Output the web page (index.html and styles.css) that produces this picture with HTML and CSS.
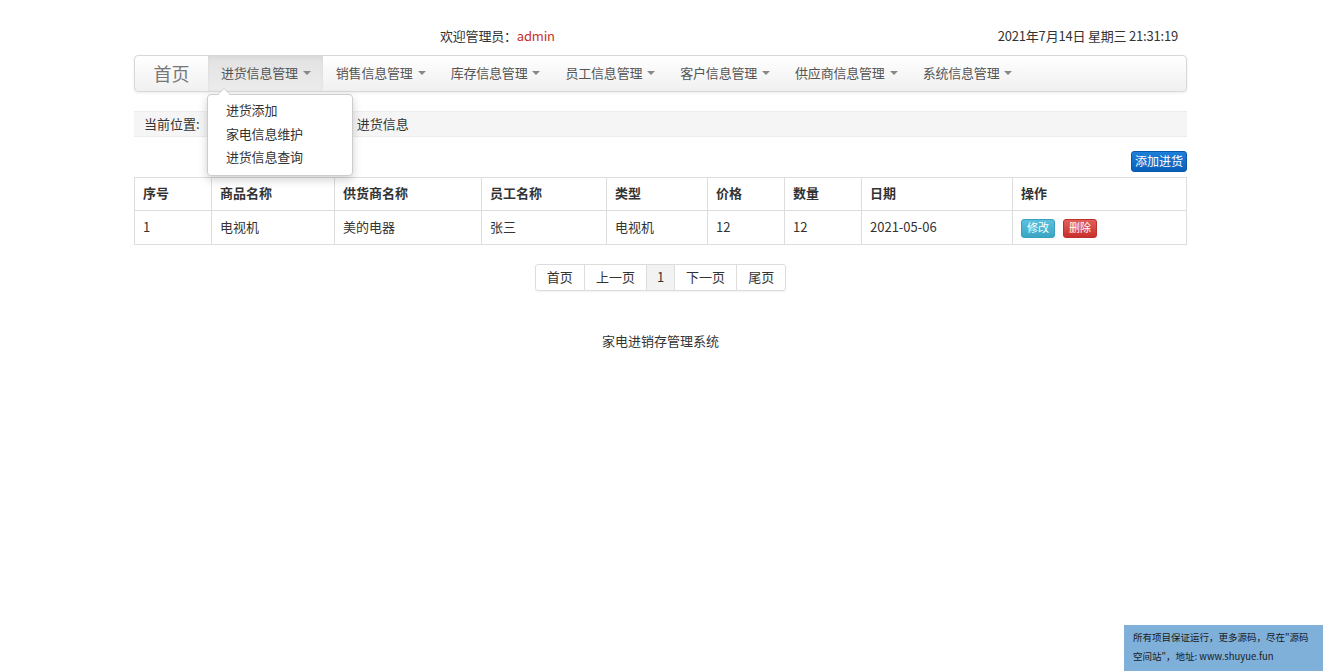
FILE: index.html
```html
<!DOCTYPE html>
<html lang="zh">
<head>
<meta charset="utf-8">
<title>家电进销存管理系统</title>
<link rel="stylesheet" href="styles.css">
</head>
<body>
<div class="container">
  <div class="topbar">
    <div class="welcome">欢迎管理员：<span class="admin">admin</span></div>
    <div class="date">2021年7月14日 星期三 21:31:19</div>
  </div>
  <div class="navbar">
    <div class="brand">首页</div>
    <ul class="nav">
      <li class="nav-item active">进货信息管理<span class="caret"></span>
        <ul class="dropdown">
          <li>进货添加</li>
          <li>家电信息维护</li>
          <li>进货信息查询</li>
        </ul>
      </li>
      <li class="nav-item">销售信息管理<span class="caret"></span></li>
      <li class="nav-item">库存信息管理<span class="caret"></span></li>
      <li class="nav-item">员工信息管理<span class="caret"></span></li>
      <li class="nav-item">客户信息管理<span class="caret"></span></li>
      <li class="nav-item">供应商信息管理<span class="caret"></span></li>
      <li class="nav-item">系统信息管理<span class="caret"></span></li>
    </ul>
  </div>
  <div class="breadcrumb"><span>当前位置:</span><span class="crumb-cur">进货信息</span></div>
  <div class="actions"><button class="btn btn-primary">添加进货</button></div>
  <table class="table">
    <colgroup>
      <col style="width:77px"><col style="width:123px"><col style="width:147px"><col style="width:125px"><col style="width:101px"><col style="width:77px"><col style="width:77px"><col style="width:151px"><col>
    </colgroup>
    <thead>
      <tr><th>序号</th><th>商品名称</th><th>供货商名称</th><th>员工名称</th><th>类型</th><th>价格</th><th>数量</th><th>日期</th><th>操作</th></tr>
    </thead>
    <tbody>
      <tr><td>1</td><td>电视机</td><td>美的电器</td><td>张三</td><td>电视机</td><td>12</td><td>12</td><td>2021-05-06</td><td><button class="btn btn-sm btn-info">修改</button><button class="btn btn-sm btn-danger">删除</button></td></tr>
    </tbody>
  </table>
  <div class="pager-wrap">
    <ul class="pagination">
      <li>首页</li><li>上一页</li><li class="current">1</li><li>下一页</li><li>尾页</li>
    </ul>
  </div>
  <div class="footer">家电进销存管理系统</div>
</div>
<div class="notice">所有项目保证运行，更多源码，尽在"源码空间站"，地址: www.shuyue.fun</div>
</body>
</html>
```
FILE: styles.css
```css
* { box-sizing: border-box; }
body {
  margin: 0;
  font-family: "Noto Sans CJK SC", "Liberation Sans", sans-serif;
  font-size: 13px;
  color: #333;
  background: #fff;
}
.container {
  width: 1053px;
  margin-left: 134px;
}
.topbar {
  display: flex;
  justify-content: space-between;
  align-items: center;
  height: 33px;
  margin-top: 20px;
  padding-bottom: 3px;
}
.welcome { margin-left: 306px; font-size: 13px; letter-spacing: -0.2px; }
.admin { color: #c9302c; }
.date { padding-right: 9px; font-size: 13px; letter-spacing: -0.2px; }
.navbar {
  display: flex;
  align-items: stretch;
  height: 37px;
  margin-top: 2px;
  border: 1px solid #d8d8d8;
  border-radius: 4px;
  background: linear-gradient(#ffffff, #f0f0f0);
  box-shadow: 0 1px 3px rgba(0,0,0,0.08);
}
.brand {
  width: 73px;
  display: flex;
  align-items: center;
  justify-content: center;
  font-size: 18px;
  color: #777;
  padding-bottom: 2px;
}
.nav {
  list-style: none;
  margin: 0;
  padding: 0;
  display: flex;
}
.nav-item {
  position: relative;
  display: flex;
  align-items: center;
  padding: 0 12px 2px 13px;
  color: #555;
  white-space: nowrap;
  letter-spacing: -0.2px;
}
.nav-item.active {
  background: linear-gradient(#e2e2e2, #ececec);
  box-shadow: inset 0 2px 4px rgba(0,0,0,0.05);
  color: #555;
}
.caret {
  display: inline-block;
  width: 0;
  height: 0;
  margin-left: 5px;
  border-top: 4px solid #888;
  border-left: 4px solid transparent;
  border-right: 4px solid transparent;
}
.dropdown {
  position: absolute;
  top: 38px;
  left: -1px;
  width: 146px;
  margin: 0;
  padding: 3px 0 6px;
  list-style: none;
  background: #fff;
  border: 1px solid #ccc;
  border-radius: 4px;
  box-shadow: 0 4px 10px rgba(0,0,0,0.18);
  z-index: 10;
  white-space: normal;
}
.dropdown::before {
  content: "";
  position: absolute;
  top: -7px;
  left: 9px;
  border-left: 7px solid transparent;
  border-right: 7px solid transparent;
  border-bottom: 7px solid #ccc;
}
.dropdown::after {
  content: "";
  position: absolute;
  top: -6px;
  left: 10px;
  border-left: 6px solid transparent;
  border-right: 6px solid transparent;
  border-bottom: 6px solid #fff;
}
.dropdown li {
  padding: 0 18px;
  height: 23.5px;
  line-height: 23.5px;
  color: #333;
}
.breadcrumb {
  margin-top: 19px;
  height: 26px;
  display: flex;
  align-items: center;
  padding: 0 0 2px 10px;
  background: #f5f5f5;
  border-top: 1px solid #ececec;
  border-bottom: 1px solid #ececec;
  color: #333;
}
.crumb-cur { margin-left: 157px; }
.actions {
  display: flex;
  justify-content: flex-end;
  margin-top: 14px;
  height: 21px;
}
.btn {
  font-family: inherit;
  border: 1px solid transparent;
  color: #fff;
  cursor: pointer;
  border-radius: 3px;
  line-height: 1;
}
.btn-primary {
  font-size: 12px;
  height: 21px;
  width: 56px;
  padding: 0 0 2px;
  background: linear-gradient(#1d7fd9, #0a5fb9);
  border-color: #0b58a8;
}
.table {
  margin-top: 5px;
  width: 100%;
  border-collapse: collapse;
  table-layout: fixed;
  border: 1px solid #ddd;
}
.table th, .table td {
  border: 1px solid #ddd;
  text-align: left;
  padding: 0 8px 3px;
  height: 33px;
  font-size: 13px;
}
.table th { font-weight: bold; color: #333; }
.table td { height: 34px; color: #333; }
.table td:last-child { padding-bottom: 0; }
.btn-sm {
  font-size: 11px;
  height: 19px;
  width: 34px;
  padding: 0 0 1px;
  margin-right: 8px;
  vertical-align: middle;
}
.btn-info {
  background: linear-gradient(#5bc0de, #3aa6c4);
  border-color: #39a1c0;
}
.btn-danger {
  background: linear-gradient(#e0605c, #c9302c);
  border-color: #bf2f2b;
}
.pager-wrap {
  display: flex;
  justify-content: center;
  margin-top: 19px;
}
.pagination {
  list-style: none;
  margin: 0;
  padding: 0;
  display: flex;
  border: 1px solid #ddd;
  border-radius: 3px;
  box-shadow: 0 1px 2px rgba(0,0,0,0.06);
}
.pagination li {
  height: 25px;
  line-height: 23px;
  padding: 0 11px;
  border-left: 1px solid #ddd;
  color: #333;
}
.pagination li:first-child { border-left: 0; }
.pagination li.current { background: #f2f2f2; padding: 0 10px; }
.footer {
  text-align: center;
  margin-top: 40px;
  color: #333;
}
.notice {
  position: fixed;
  left: 1124px;
  top: 625px;
  width: 199px;
  height: 46px;
  background: #7fb0da;
  color: #1a1a1a;
  font-size: 9.5px;
  line-height: 19px;
  padding: 3px 9px;
}
```
